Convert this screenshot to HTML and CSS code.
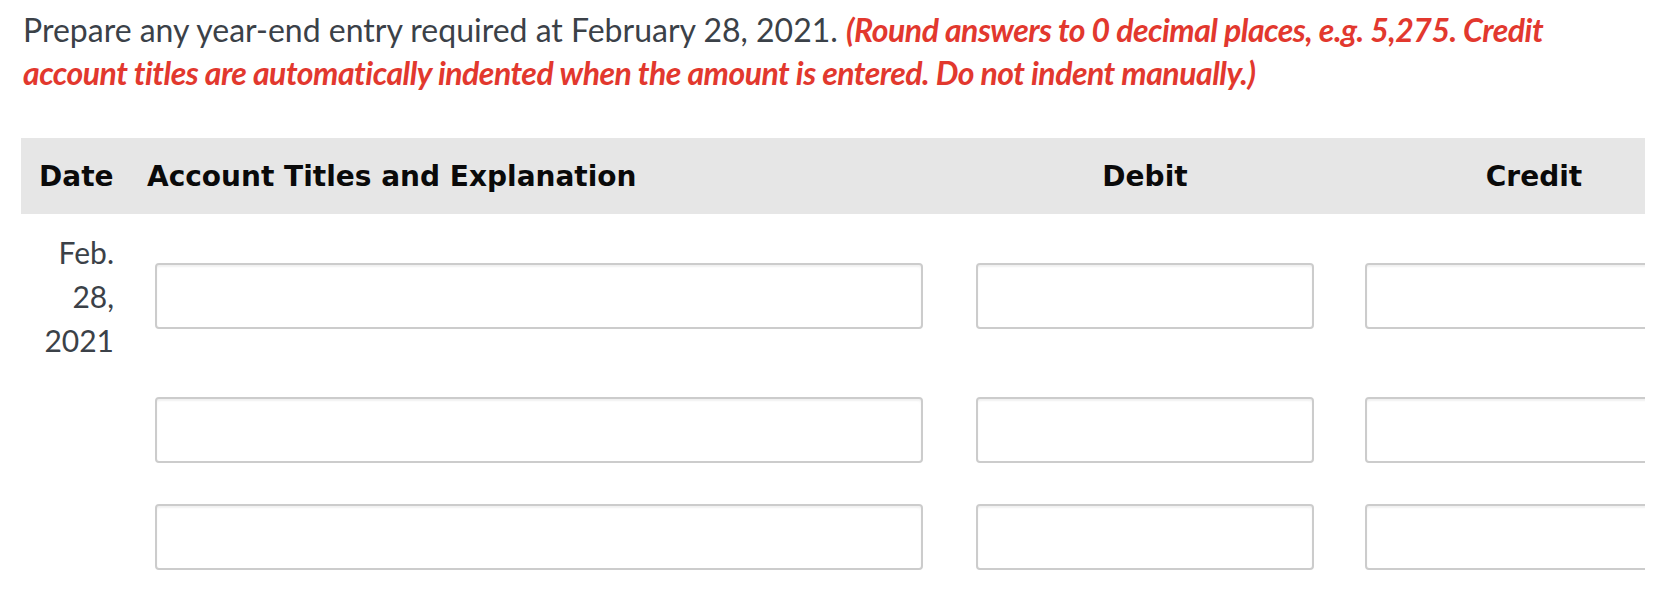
FILE: index.html
```html
<!DOCTYPE html>
<html lang="en">
<head>
<meta charset="utf-8">
<title>Journal entry</title>
<link rel="stylesheet" href="styles.css">
</head>
<body>
<div class="page">
  <p class="prompt">Prepare any year-end entry required at February 28, 2021. <span class="note">(Round answers to 0 decimal places, e.g. 5,275. Credit account titles are automatically indented when the amount is entered. Do not indent manually.)</span></p>
  <div class="sheet">
    <table class="journal">
      <colgroup>
        <col class="c-date">
        <col class="c-acct">
        <col class="c-debit">
        <col class="c-credit">
      </colgroup>
      <thead>
        <tr>
          <th class="h-date">Date</th>
          <th class="h-acct">Account Titles and Explanation</th>
          <th class="h-amt">Debit</th>
          <th class="h-amt">Credit</th>
        </tr>
      </thead>
      <tbody>
        <tr class="first">
          <td class="date">Feb.<br>28,<br>2021</td>
          <td class="acct"><input class="field f-acct" type="text"></td>
          <td class="amt"><input class="field f-amt" type="text"></td>
          <td class="amt"><input class="field f-amt" type="text"></td>
        </tr>
        <tr>
          <td class="date"></td>
          <td class="acct"><input class="field f-acct" type="text"></td>
          <td class="amt"><input class="field f-amt" type="text"></td>
          <td class="amt"><input class="field f-amt" type="text"></td>
        </tr>
        <tr>
          <td class="date"></td>
          <td class="acct"><input class="field f-acct" type="text"></td>
          <td class="amt"><input class="field f-amt" type="text"></td>
          <td class="amt"><input class="field f-amt" type="text"></td>
        </tr>
      </tbody>
    </table>
  </div>
</div>
</body>
</html>
```
FILE: styles.css
```css
html, body {
  margin: 0;
  padding: 0;
  background: #ffffff;
}

.page {
  padding-left: 21px;
  width: 1624px;
  overflow: hidden;
}

.prompt {
  margin: 0;
  padding: 8px 0 0 2px;
  font-family: Lato, "Liberation Sans", sans-serif;
  font-size: 32px;
  line-height: 43px;
  color: #3b4148;
}

.note {
  color: #e2382e;
  font-weight: bold;
  font-style: italic;
  letter-spacing: -0.5px;
}

.sheet {
  margin-top: 44px;
  width: 1624px;
  overflow: hidden;
}

.journal {
  border-collapse: collapse;
  table-layout: fixed;
  width: 1702px;
}

.c-date { width: 114px; }
.c-acct { width: 810px; }
.c-debit { width: 400px; }
.c-credit { width: 378px; }

.journal thead tr {
  background: #e6e6e6;
  height: 76px;
}

.journal th {
  font-family: "DejaVu Sans", Verdana, sans-serif;
  font-weight: bold;
  font-size: 28px;
  color: #0a0a0a;
  padding: 0;
  vertical-align: middle;
}

.journal th.h-date {
  text-align: left;
  padding-left: 18px;
}

.journal th.h-acct {
  text-align: left;
  padding-left: 12px;
}

.journal th.h-amt {
  text-align: center;
}

.journal td {
  padding: 20px 0 21px 0;
  vertical-align: middle;
}

.journal tr.first td {
  padding-top: 16px;
  padding-bottom: 15px;
}

.date {
  font-family: Lato, "Liberation Sans", sans-serif;
  font-size: 30px;
  line-height: 44px;
  color: #3b4148;
  text-align: right;
}

.journal td.date {
  padding-right: 21px;
}

.field {
  display: block;
  box-sizing: border-box;
  height: 66px;
  margin: 0;
  border: 2px solid #cccccc;
  border-radius: 4px;
  background: #ffffff;
  box-shadow: inset 0 2px 2px rgba(0, 0, 0, 0.06);
  font-family: Lato, sans-serif;
  font-size: 24px;
  outline: none;
}

.f-acct {
  width: 768px;
  margin-left: 20px;
}

.f-amt {
  width: 338px;
  margin: 0 auto;
}
```
